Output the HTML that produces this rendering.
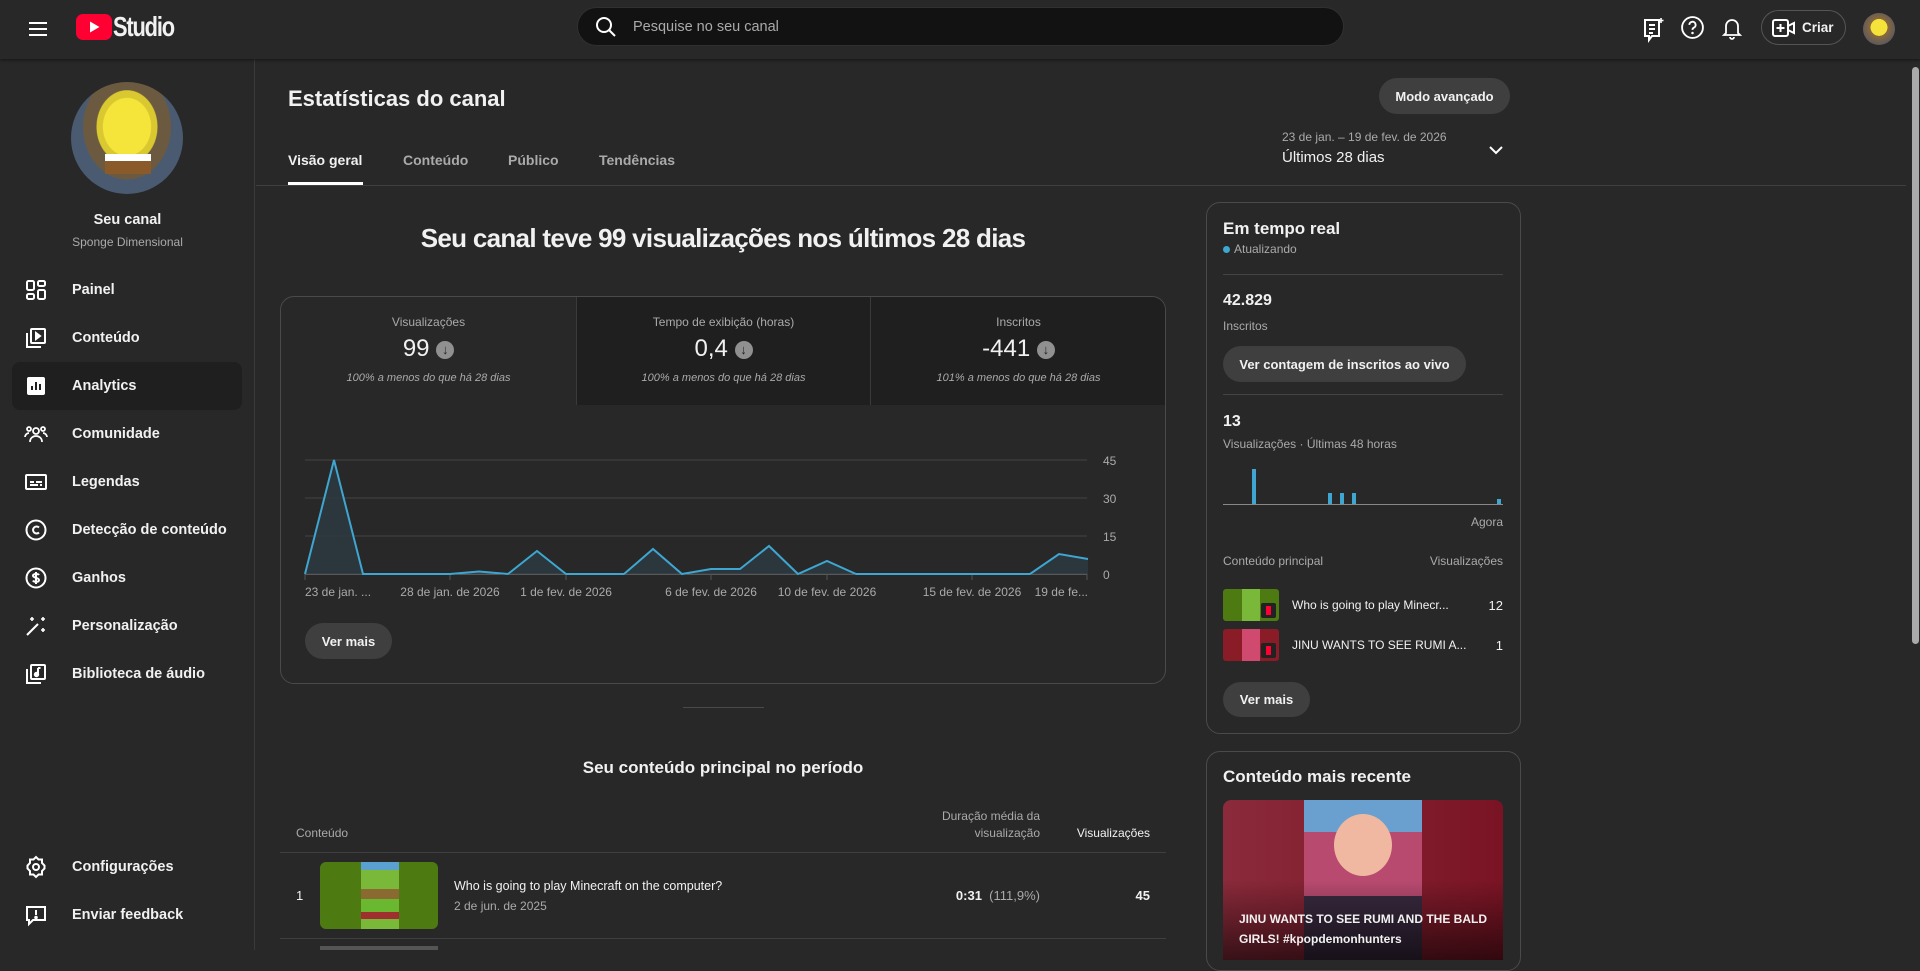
<!DOCTYPE html>
<html><head><meta charset="utf-8">
<style>
*{box-sizing:border-box;margin:0;padding:0}
body{width:1920px;height:950px;overflow:hidden;background:#282828;font-family:"Liberation Sans",sans-serif;color:#f1f1f1;position:relative}
.a{position:absolute}
.hdr{left:0;top:0;width:1920px;height:59px;background:#282828;box-shadow:0 1px 3px rgba(0,0,0,.5);z-index:2}
.side{left:0;top:59px;width:255px;height:891px;border-right:1px solid #3a3a3a}
.nav{left:0;width:255px;height:48px;display:flex;align-items:center;font-size:14.5px;font-weight:bold;color:#f1f1f1}
.nav svg{position:absolute;left:24px;width:24px;height:24px}
.nav span{position:absolute;left:72px}
.btn{background:#3f3f3f;border-radius:18px;font-size:13px;font-weight:bold;display:flex;align-items:center;justify-content:center;color:#f1f1f1}
.muted{color:#aaa}
.c{text-align:center}
</style></head><body>

<div class="a hdr">
  <svg class="a" style="left:26px;top:17px" width="24" height="24" viewBox="0 0 24 24"><path d="M3 6h18M3 12h18M3 18h18" stroke="#fff" stroke-width="2"/></svg>
  <svg class="a" style="left:76px;top:14px" width="36" height="26" viewBox="0 0 36 26"><rect width="36" height="26" rx="7" fill="#ff0033"/><path d="M14 7.5v11l9.5-5.5z" fill="#fff"/></svg>
  <div class="a" style="left:113px;top:11px;font-size:28px;font-weight:bold;letter-spacing:-1.5px;transform:scaleX(.78);transform-origin:left">Studio</div>
  <div class="a" style="left:577px;top:7px;width:767px;height:39px;background:#121212;border-radius:20px;border:1px solid #303030">
    <svg class="a" style="left:16px;top:7px" width="24" height="24" viewBox="0 0 24 24"><circle cx="10" cy="10" r="7" stroke="#fff" stroke-width="2" fill="none"/><path d="M15 15l6 6" stroke="#fff" stroke-width="2"/></svg>
    <div class="a muted" style="left:55px;top:11px;font-size:14.5px">Pesquise no seu canal</div>
  </div>
  <svg class="a" style="left:1641px;top:17px" width="24" height="26" viewBox="0 0 24 26"><path d="M4 3h14v16h-7l-3 4v-4H4z" stroke="#fff" stroke-width="2" fill="none"/><path d="M8 8h6M8 12h6M8 16h4" stroke="#fff" stroke-width="2"/><path d="M20 1v5M17.5 3.5h5" stroke="#fff" stroke-width="1.6"/></svg>
  <svg class="a" style="left:1680px;top:15px" width="25" height="25" viewBox="0 0 24 24"><circle cx="12" cy="12" r="10" stroke="#fff" stroke-width="1.8" fill="none"/><path d="M9 9.5a3 3 0 1 1 4 2.8c-.8.4-1 1-1 2" stroke="#fff" stroke-width="1.8" fill="none"/><circle cx="12" cy="17.3" r="1.2" fill="#fff"/></svg>
  <svg class="a" style="left:1720px;top:15px" width="24" height="26" viewBox="0 0 24 26"><path d="M6 18V11a6 6 0 0 1 12 0v7l2 2H4z" stroke="#fff" stroke-width="1.8" fill="none"/><path d="M10 22a2 2 0 0 0 4 0" stroke="#fff" stroke-width="1.8" fill="none"/></svg>
  <div class="a" style="left:1761px;top:10px;width:85px;height:35px;border:1px solid #555;border-radius:18px">
    <svg class="a" style="left:10px;top:7px" width="24" height="20" viewBox="0 0 24 20"><rect x="1" y="2" width="15" height="16" rx="2" stroke="#fff" stroke-width="2" fill="none"/><path d="M8.5 6v8M4.5 10h8M16 8l6-3v10l-6-3" stroke="#fff" stroke-width="2" fill="none"/></svg>
    <div class="a" style="left:40px;top:9px;font-size:13.5px;font-weight:bold">Criar</div>
  </div>
  <div class="a" style="left:1863px;top:13px;width:32px;height:32px;border-radius:50%;background:radial-gradient(circle at 50% 45%,#f5e23a 0 35%,#8a6a3a 36%,#556 80%)"></div>
</div>

<div class="a side">
  <div class="a" style="left:71px;top:23px;width:112px;height:112px;border-radius:50%;background:radial-gradient(ellipse at 50% 40%,#f5e43a 0 30%,#d9c830 31% 38%,#6b5a40 39% 55%,#4a5a70 56%);overflow:hidden">
    <div class="a" style="left:34px;top:78px;width:46px;height:14px;background:#8a5a2a"></div>
    <div class="a" style="left:34px;top:72px;width:46px;height:7px;background:#fff"></div>
  </div>
  <div class="a c" style="left:0;top:153px;width:255px;font-size:14.5px;font-weight:bold">Seu canal</div>
  <div class="a c muted" style="left:0;top:176px;width:255px;font-size:12px">Sponge Dimensional</div>
</div>
<div class="a" style="left:12px;top:362px;width:230px;height:48px;background:#1f1f1f;border-radius:8px"></div>

<div class="a nav" style="top:266px"><svg viewBox="0 0 24 24" fill="none" stroke="#fff" stroke-width="2"><rect x="3" y="3" width="7" height="9" rx="1.5"/><rect x="14" y="3" width="7" height="5" rx="1.5"/><rect x="3" y="16" width="7" height="5" rx="1.5"/><rect x="14" y="12" width="7" height="9" rx="1.5"/></svg><span>Painel</span></div>
<div class="a nav" style="top:314px"><svg viewBox="0 0 24 24" fill="none" stroke="#fff" stroke-width="2"><rect x="7" y="3" width="14" height="14" rx="1"/><path d="M3 7v14h14"/><path d="M12 7v6l4-3z" fill="#fff"/></svg><span>Conteúdo</span></div>
<div class="a nav" style="top:362px"><svg viewBox="0 0 24 24"><rect x="3" y="3" width="18" height="18" rx="2" fill="#fff"/><path d="M8 16v-4M12 16V8M16 16v-6" stroke="#1f1f1f" stroke-width="2"/></svg><span>Analytics</span></div>
<div class="a nav" style="top:410px"><svg viewBox="0 0 24 24" fill="none" stroke="#fff" stroke-width="1.8"><circle cx="12" cy="9" r="3"/><path d="M6 20c0-4 3-6 6-6s6 2 6 6"/><circle cx="5" cy="7" r="2"/><circle cx="19" cy="7" r="2"/><path d="M1 15c0-2 2-4 4-4M23 15c0-2-2-4-4-4"/></svg><span>Comunidade</span></div>
<div class="a nav" style="top:458px"><svg viewBox="0 0 24 24" fill="none" stroke="#fff" stroke-width="2"><rect x="2" y="5" width="20" height="14" rx="1"/><path d="M6 12h4M12 12h6M6 15h8M16 15h2"/></svg><span>Legendas</span></div>
<div class="a nav" style="top:506px"><svg viewBox="0 0 24 24" fill="none" stroke="#fff" stroke-width="2"><circle cx="12" cy="12" r="9.5"/><path d="M15 9.5a3.5 3.5 0 1 0 0 5"/></svg><span>Detecção de conteúdo</span></div>
<div class="a nav" style="top:554px"><svg viewBox="0 0 24 24" fill="none" stroke="#fff" stroke-width="2"><circle cx="12" cy="12" r="9.5"/><path d="M15 9c-1-1.5-6-1.5-6 .8S15 11.5 15 14s-5 2.3-6 .5M12 6v12"/></svg><span>Ganhos</span></div>
<div class="a nav" style="top:602px"><svg viewBox="0 0 24 24" fill="none" stroke="#fff" stroke-width="2"><path d="M3 21L14 10"/><path d="M8 3v4M6 5h4M19 3v4M17 5h4M19 14v4M17 16h4" stroke-width="1.6"/></svg><span>Personalização</span></div>
<div class="a nav" style="top:650px"><svg viewBox="0 0 24 24" fill="none" stroke="#fff" stroke-width="2"><rect x="7" y="3" width="14" height="14" rx="1"/><path d="M3 7v14h14"/><path d="M14 6v6.5" /><circle cx="12.5" cy="12.5" r="1.7" fill="#fff"/><path d="M14 6h2.5"/></svg><span>Biblioteca de áudio</span></div>
<div class="a nav" style="top:843px"><svg viewBox="0 0 24 24" fill="none" stroke="#fff" stroke-width="2"><path d="M12 2l2.5 2.5H18v3.5l2.5 2.5v3L18 16v3.5h-3.5L12 22l-2.5-2.5H6V16l-2.5-2.5v-3L6 8V4.5h3.5z"/><circle cx="12" cy="12" r="3"/></svg><span>Configurações</span></div>
<div class="a nav" style="top:891px"><svg viewBox="0 0 24 24" fill="none" stroke="#fff" stroke-width="2"><path d="M3 4h18v13H9l-4 4v-4H3z"/><path d="M12 7v5"/><circle cx="12" cy="14.5" r=".8" fill="#fff"/></svg><span>Enviar feedback</span></div>

<div class="a" style="left:288px;top:86px;font-size:22px;font-weight:bold">Estatísticas do canal</div>
<div class="a btn" style="left:1379px;top:78px;width:131px;height:36px">Modo avançado</div>
<div class="a muted" style="left:1282px;top:130px;font-size:12px">23 de jan. – 19 de fev. de 2026</div>
<div class="a" style="left:1282px;top:149px;font-size:15px">Últimos 28 dias</div>
<svg class="a" style="left:1487px;top:141px" width="18" height="18" viewBox="0 0 18 18"><path d="M3 6l6 6 6-6" stroke="#fff" stroke-width="2" fill="none"/></svg>
<div class="a" style="left:288px;top:152px;font-size:14px;font-weight:bold">Visão geral</div>
<div class="a muted" style="left:403px;top:152px;font-size:14px;font-weight:bold">Conteúdo</div>
<div class="a muted" style="left:508px;top:152px;font-size:14px;font-weight:bold">Público</div>
<div class="a muted" style="left:599px;top:152px;font-size:14px;font-weight:bold">Tendências</div>
<div class="a" style="left:288px;top:182px;width:75px;height:3px;background:#fff"></div>
<div class="a" style="left:256px;top:185px;width:1650px;height:1px;background:#3f3f3f"></div>

<div class="a c" style="left:280px;top:223px;width:886px;font-size:26px;font-weight:bold;letter-spacing:-.7px">Seu canal teve 99 visualizações nos últimos 28 dias</div>

<div class="a" style="left:280px;top:296px;width:886px;height:388px;border:1px solid #4a4a4a;border-radius:14px;overflow:hidden">
  <div class="a" style="left:295px;top:0;width:590px;height:108px;background:#1f1f1f"></div>
  <div class="a" style="left:295px;top:0;width:1px;height:108px;background:#3a3a3a"></div>
  <div class="a" style="left:589px;top:0;width:1px;height:108px;background:#3a3a3a"></div>
  <div class="a c muted" style="left:0;top:18px;width:295px;font-size:12px">Visualizações</div>
  <div class="a c muted" style="left:295px;top:18px;width:295px;font-size:12px">Tempo de exibição (horas)</div>
  <div class="a c muted" style="left:590px;top:18px;width:295px;font-size:12px">Inscritos</div>
  <div class="a c" style="left:0;top:38px;width:295px;font-size:24px">99 <span style="display:inline-block;width:18px;height:18px;border-radius:50%;background:#909090;vertical-align:2px;font-size:13px;color:#282828;line-height:18px;font-weight:bold">↓</span></div>
  <div class="a c" style="left:295px;top:38px;width:295px;font-size:24px">0,4 <span style="display:inline-block;width:18px;height:18px;border-radius:50%;background:#909090;vertical-align:2px;font-size:13px;color:#1f1f1f;line-height:18px;font-weight:bold">↓</span></div>
  <div class="a c" style="left:590px;top:38px;width:295px;font-size:24px">-441 <span style="display:inline-block;width:18px;height:18px;border-radius:50%;background:#909090;vertical-align:2px;font-size:13px;color:#1f1f1f;line-height:18px;font-weight:bold">↓</span></div>
  <div class="a c muted" style="left:0;top:75px;width:295px;font-size:11px;font-style:italic">100% a menos do que há 28 dias</div>
  <div class="a c muted" style="left:295px;top:75px;width:295px;font-size:11px;font-style:italic">100% a menos do que há 28 dias</div>
  <div class="a c muted" style="left:590px;top:75px;width:295px;font-size:11px;font-style:italic">101% a menos do que há 28 dias</div>
</div>

<svg class="a" style="left:0;top:0" width="1200" height="700">
  <g stroke="#3a3a3a" stroke-width="1.5"><path d="M305 460H1087M305 498H1087M305 536H1087"/></g>
  <path d="M305 574H1087" stroke="#888" stroke-width="1"/>
  <g stroke="#555"><path d="M305 574v6M450 574v6M566 574v6M711 574v6M827 574v6M972 574v6M1087 574v6"/></g>
  <path d="M305 574L334 460L363 574L450 574L479 571.5L508 574L537 551L566 574L624 574L653 549L682 574L711 569L740 569L769 546L798 574L827 561L856 574L1030 574L1059 554L1088 559L1088 574Z" fill="#2c3b42" fill-opacity=".8"/>
  <path d="M305 574L334 460L363 574L450 574L479 571.5L508 574L537 551L566 574L624 574L653 549L682 574L711 569L740 569L769 546L798 574L827 561L856 574L1030 574L1059 554L1088 559" fill="none" stroke="#3ea6d0" stroke-width="2"/>
  <g fill="#aaa" font-size="12" font-family="Liberation Sans, sans-serif">
    <text x="1103" y="465">45</text><text x="1103" y="503">30</text><text x="1103" y="541">15</text><text x="1103" y="579">0</text>
    <text x="305" y="596">23 de jan. ...</text>
    <text x="450" y="596" text-anchor="middle">28 de jan. de 2026</text>
    <text x="566" y="596" text-anchor="middle">1 de fev. de 2026</text>
    <text x="711" y="596" text-anchor="middle">6 de fev. de 2026</text>
    <text x="827" y="596" text-anchor="middle">10 de fev. de 2026</text>
    <text x="972" y="596" text-anchor="middle">15 de fev. de 2026</text>
    <text x="1088" y="596" text-anchor="end">19 de fe...</text>
  </g>
</svg>
<div class="a btn" style="left:305px;top:623px;width:87px;height:36px">Ver mais</div>
<div class="a" style="left:683px;top:707px;width:81px;height:1px;background:#4a4a4a"></div>

<div class="a c" style="left:280px;top:758px;width:886px;font-size:17px;font-weight:bold">Seu conteúdo principal no período</div>
<div class="a muted" style="left:296px;top:826px;font-size:12px">Conteúdo</div>
<div class="a muted" style="left:900px;top:808px;width:140px;text-align:right;font-size:12px;line-height:17px">Duração média da visualização</div>
<div class="a" style="left:1050px;top:826px;width:100px;text-align:right;font-size:12px">Visualizações</div>
<div class="a" style="left:280px;top:852px;width:886px;height:1px;background:#3f3f3f"></div>
<div class="a" style="left:296px;top:888px;font-size:13px">1</div>
<div class="a" style="left:320px;top:862px;width:118px;height:67px;border-radius:6px;background:#4e7a12;overflow:hidden"><div class="a" style="left:41px;top:0;width:38px;height:67px;background:linear-gradient(#5aa0d0 0 12%,#7ab83a 12% 40%,#8a6a30 40% 55%,#6ab830 55% 75%,#a03030 75% 85%,#7ab83a 85%)"></div></div>
<div class="a" style="left:454px;top:879px;font-size:12.5px">Who is going to play Minecraft on the computer?</div>
<div class="a muted" style="left:454px;top:899px;font-size:12px">2 de jun. de 2025</div>
<div class="a" style="left:900px;top:888px;width:140px;text-align:right;font-size:13px"><b>0:31</b> <span class="muted">&nbsp;(111,9%)</span></div>
<div class="a" style="left:1050px;top:888px;width:100px;text-align:right;font-size:13px;font-weight:bold">45</div>
<div class="a" style="left:280px;top:938px;width:886px;height:1px;background:#3f3f3f"></div>
<div class="a" style="left:320px;top:946px;width:118px;height:4px;background:#555"></div>

<div class="a" style="left:1206px;top:202px;width:315px;height:532px;border:1px solid #4a4a4a;border-radius:14px"></div>
<div class="a" style="left:1223px;top:219px;font-size:17px;font-weight:bold">Em tempo real</div>
<div class="a" style="left:1223px;top:246px;width:7px;height:7px;border-radius:50%;background:#3ea6d0"></div>
<div class="a muted" style="left:1234px;top:242px;font-size:12px">Atualizando</div>
<div class="a" style="left:1223px;top:274px;width:280px;height:1px;background:#444"></div>
<div class="a" style="left:1223px;top:292px;font-size:16px;font-weight:bold">42.829</div>
<div class="a muted" style="left:1223px;top:319px;font-size:12px">Inscritos</div>
<div class="a btn" style="left:1223px;top:346px;width:243px;height:36px">Ver contagem de inscritos ao vivo</div>
<div class="a" style="left:1223px;top:394px;width:280px;height:1px;background:#444"></div>
<div class="a" style="left:1223px;top:413px;font-size:16px;font-weight:bold">13</div>
<div class="a muted" style="left:1223px;top:437px;font-size:12px">Visualizações · Últimas 48 horas</div>
<div class="a" style="left:1223px;top:504px;width:280px;height:1px;background:#888"></div>
<div class="a" style="left:1252px;top:469px;width:4px;height:35px;background:#3ea6d0"></div>
<div class="a" style="left:1328px;top:493px;width:4px;height:11px;background:#3ea6d0"></div>
<div class="a" style="left:1340px;top:493px;width:4px;height:11px;background:#3ea6d0"></div>
<div class="a" style="left:1352px;top:493px;width:4px;height:11px;background:#3ea6d0"></div>
<div class="a" style="left:1497px;top:499px;width:4px;height:5px;background:#3ea6d0"></div>
<div class="a muted" style="left:1440px;top:515px;width:63px;text-align:right;font-size:12px">Agora</div>
<div class="a muted" style="left:1223px;top:554px;font-size:12px">Conteúdo principal</div>
<div class="a muted" style="left:1400px;top:554px;width:103px;text-align:right;font-size:12px">Visualizações</div>
<div class="a" style="left:1223px;top:589px;width:56px;height:32px;border-radius:3px;background:#4e7a12;overflow:hidden"><div class="a" style="left:19px;width:18px;height:32px;background:#7ab83a"></div><div class="a" style="left:38px;top:14px;width:15px;height:15px;background:#222;border-radius:2px"><div class="a" style="left:5px;top:3px;width:5px;height:9px;background:#f03"></div></div></div>
<div class="a" style="left:1292px;top:598px;font-size:12px">Who is going to play Minecr...</div>
<div class="a" style="left:1470px;top:598px;width:33px;text-align:right;font-size:13px">12</div>
<div class="a" style="left:1223px;top:629px;width:56px;height:32px;border-radius:3px;background:#8a1c28;overflow:hidden"><div class="a" style="left:19px;width:18px;height:32px;background:#d04a70"></div><div class="a" style="left:38px;top:14px;width:15px;height:15px;background:#222;border-radius:2px"><div class="a" style="left:5px;top:3px;width:5px;height:9px;background:#f03"></div></div></div>
<div class="a" style="left:1292px;top:638px;font-size:12px">JINU WANTS TO SEE RUMI A...</div>
<div class="a" style="left:1470px;top:638px;width:33px;text-align:right;font-size:13px">1</div>
<div class="a btn" style="left:1223px;top:682px;width:87px;height:35px">Ver mais</div>

<div class="a" style="left:1206px;top:751px;width:315px;height:220px;border:1px solid #4a4a4a;border-radius:14px"></div>
<div class="a" style="left:1223px;top:767px;font-size:17px;font-weight:bold">Conteúdo mais recente</div>
<div class="a" style="left:1223px;top:800px;width:280px;height:160px;border-radius:8px 8px 0 0;background:linear-gradient(90deg,#8a2a3a,#7a1424);overflow:hidden">
  <div class="a" style="left:81px;top:0;width:118px;height:160px;background:linear-gradient(#6aa0d0 0 20%,#b84a70 20% 60%,#3a2a40 60%)">
    <div class="a" style="left:30px;top:14px;width:58px;height:62px;border-radius:50%;background:#f0b8a0"></div>
  </div>
  <div class="a" style="left:0;top:80px;width:280px;height:80px;background:linear-gradient(transparent,rgba(0,0,0,.6))"></div>
  <div class="a" style="left:16px;top:109px;width:250px;font-size:12px;font-weight:bold;line-height:20px">JINU WANTS TO SEE RUMI AND THE BALD GIRLS! #kpopdemonhunters</div>
</div>

<div class="a" style="left:1912px;top:67px;width:7px;height:577px;background:#aaa;border-radius:4px"></div>
</body></html>
